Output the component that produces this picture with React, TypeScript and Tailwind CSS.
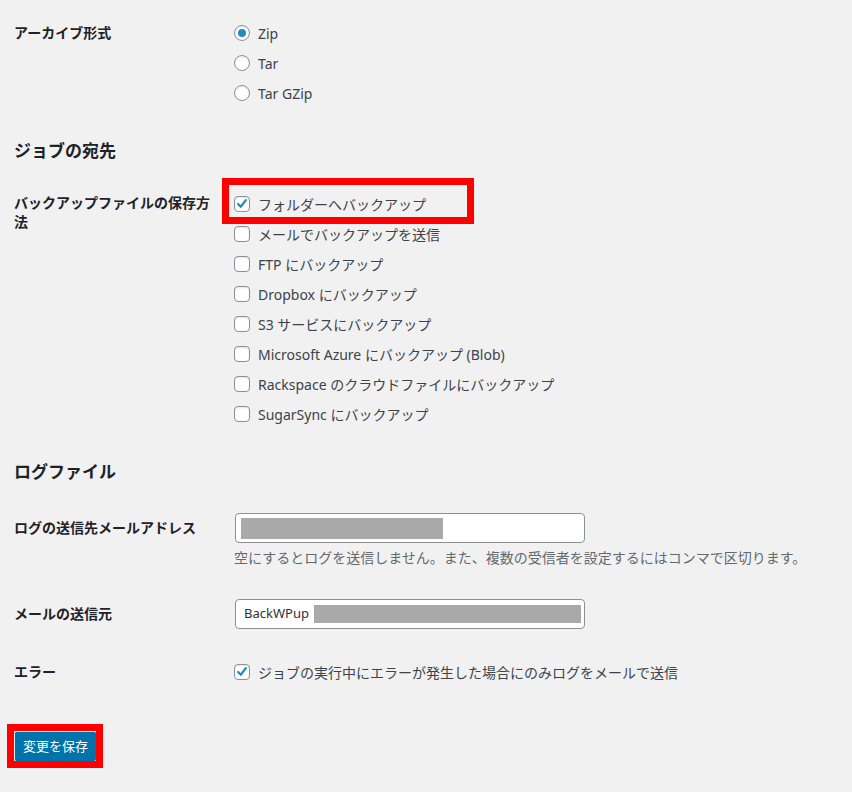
import React from "react";

const font = { fontFamily: '"Noto Sans", "Noto Sans CJK JP", sans-serif' };

function Radio({ checked, label }: { checked?: boolean; label: string }) {
  return (
    <div className="flex h-[30px] items-center">
      <span className="flex h-4 w-4 items-center justify-center rounded-full border border-[#8c8f94] bg-white shadow-[inset_0_1px_2px_rgba(0,0,0,0.1)]">
        {checked && <span className="h-2 w-2 rounded-full bg-[#1e8cbe]" />}
      </span>
      <span className="ml-[8px] text-[14px] text-[#3c434a]">{label}</span>
    </div>
  );
}

function Check({ checked, label }: { checked?: boolean; label: string }) {
  return (
    <div className="flex h-[30px] items-center">
      <span className="flex h-4 w-4 items-center justify-center rounded-[4px] border border-[#8c8f94] bg-white shadow-[inset_0_1px_2px_rgba(0,0,0,0.1)]">
        {checked && (
          <svg viewBox="0 0 20 20" className="h-[16px] w-[16px]">
            <path d="M4.5 10 L8.2 14 L15.5 4.5" fill="none" stroke="#1e8cbe" strokeWidth="3.2" strokeLinecap="round" strokeLinejoin="round" />
          </svg>
        )}
      </span>
      <span className="ml-[8px] text-[14px] text-[#3c434a]">{label}</span>
    </div>
  );
}

function Label({ children }: { children: React.ReactNode }) {
  return <div className="w-[220px] shrink-0 pr-[20px] text-[14px] font-semibold leading-[20px] text-[#1d2327]">{children}</div>;
}

export default function App() {
  return (
    <div className="min-h-[792px] w-[852px] bg-[#f1f1f1] px-[14px]" style={font}>
      <div className="flex pt-[18px]">
        <div className="pt-[5px]">
          <Label>アーカイブ形式</Label>
        </div>
        <div>
          <Radio checked label="Zip" />
          <Radio label="Tar" />
          <Radio label="Tar GZip" />
        </div>
      </div>

      <h2 className="mt-[31px] text-[17px] font-bold leading-[24px] text-[#1d2327]">ジョブの宛先</h2>

      <div className="mt-[26px] flex">
        <div className="pt-[4px]">
          <Label>
            <span className="block w-[200px] leading-[19px]">バックアップファイルの保存方法</span>
          </Label>
        </div>
        <div>
          <div className="relative">
            <Check checked label="フォルダーへバックアップ" />
            <div className="pointer-events-none absolute left-[-12px] top-[-11px] h-[46px] w-[252px] border-[7px] border-[#ff0000]" />
          </div>
          <Check label="メールでバックアップを送信" />
          <Check label="FTP にバックアップ" />
          <Check label="Dropbox にバックアップ" />
          <Check label="S3 サービスにバックアップ" />
          <Check label="Microsoft Azure にバックアップ (Blob)" />
          <Check label="Rackspace のクラウドファイルにバックアップ" />
          <Check label="SugarSync にバックアップ" />
        </div>
      </div>

      <h2 className="mt-[31px] text-[17px] font-bold leading-[24px] text-[#1d2327]">ログファイル</h2>

      <div className="mt-[29px] flex">
        <div className="pt-[5px]">
          <Label>ログの送信先メールアドレス</Label>
        </div>
        <div className="ml-[1px]">
          <div className="flex h-[30px] w-[350px] items-center rounded-[4px] border border-[#8c8f94] bg-white px-[5px]">
            <div className="h-[21px] w-[202px] bg-[#a9a9a9]" />
          </div>
          <p className="-ml-[1px] mt-[5px] text-[14px] leading-[20px] text-[#646970]">
            空にするとログを送信しません。また、複数の受信者を設定するにはコンマで区切ります。
          </p>
        </div>
      </div>

      <div className="mt-[31px] flex">
        <div className="pt-[5px]">
          <Label>メールの送信元</Label>
        </div>
        <div className="ml-[1px]">
          <div className="flex h-[30px] w-[350px] items-center rounded-[4px] border border-[#8c8f94] bg-white pl-[8px] pr-[3px]">
            <span className="text-[13px] text-[#2c3338]">BackWPup</span>
            <div className="ml-[5px] h-[18px] flex-1 bg-[#a9a9a9]" />
          </div>
        </div>
      </div>

      <div className="mt-[28px] flex">
        <div className="pt-[5px]">
          <Label>エラー</Label>
        </div>
        <div>
          <Check checked label="ジョブの実行中にエラーが発生した場合にのみログをメールで送信" />
        </div>
      </div>

      <div className="-ml-[7px] mt-[37px] inline-block border-[7px] border-[#ff0000]">
        <button className="flex h-[30px] w-[82px] items-center justify-center rounded-[2px] border-t border-l border-[#e6f2f8] bg-[#0073aa] text-[13px] text-white">
          変更を保存
        </button>
      </div>
    </div>
  );
}
